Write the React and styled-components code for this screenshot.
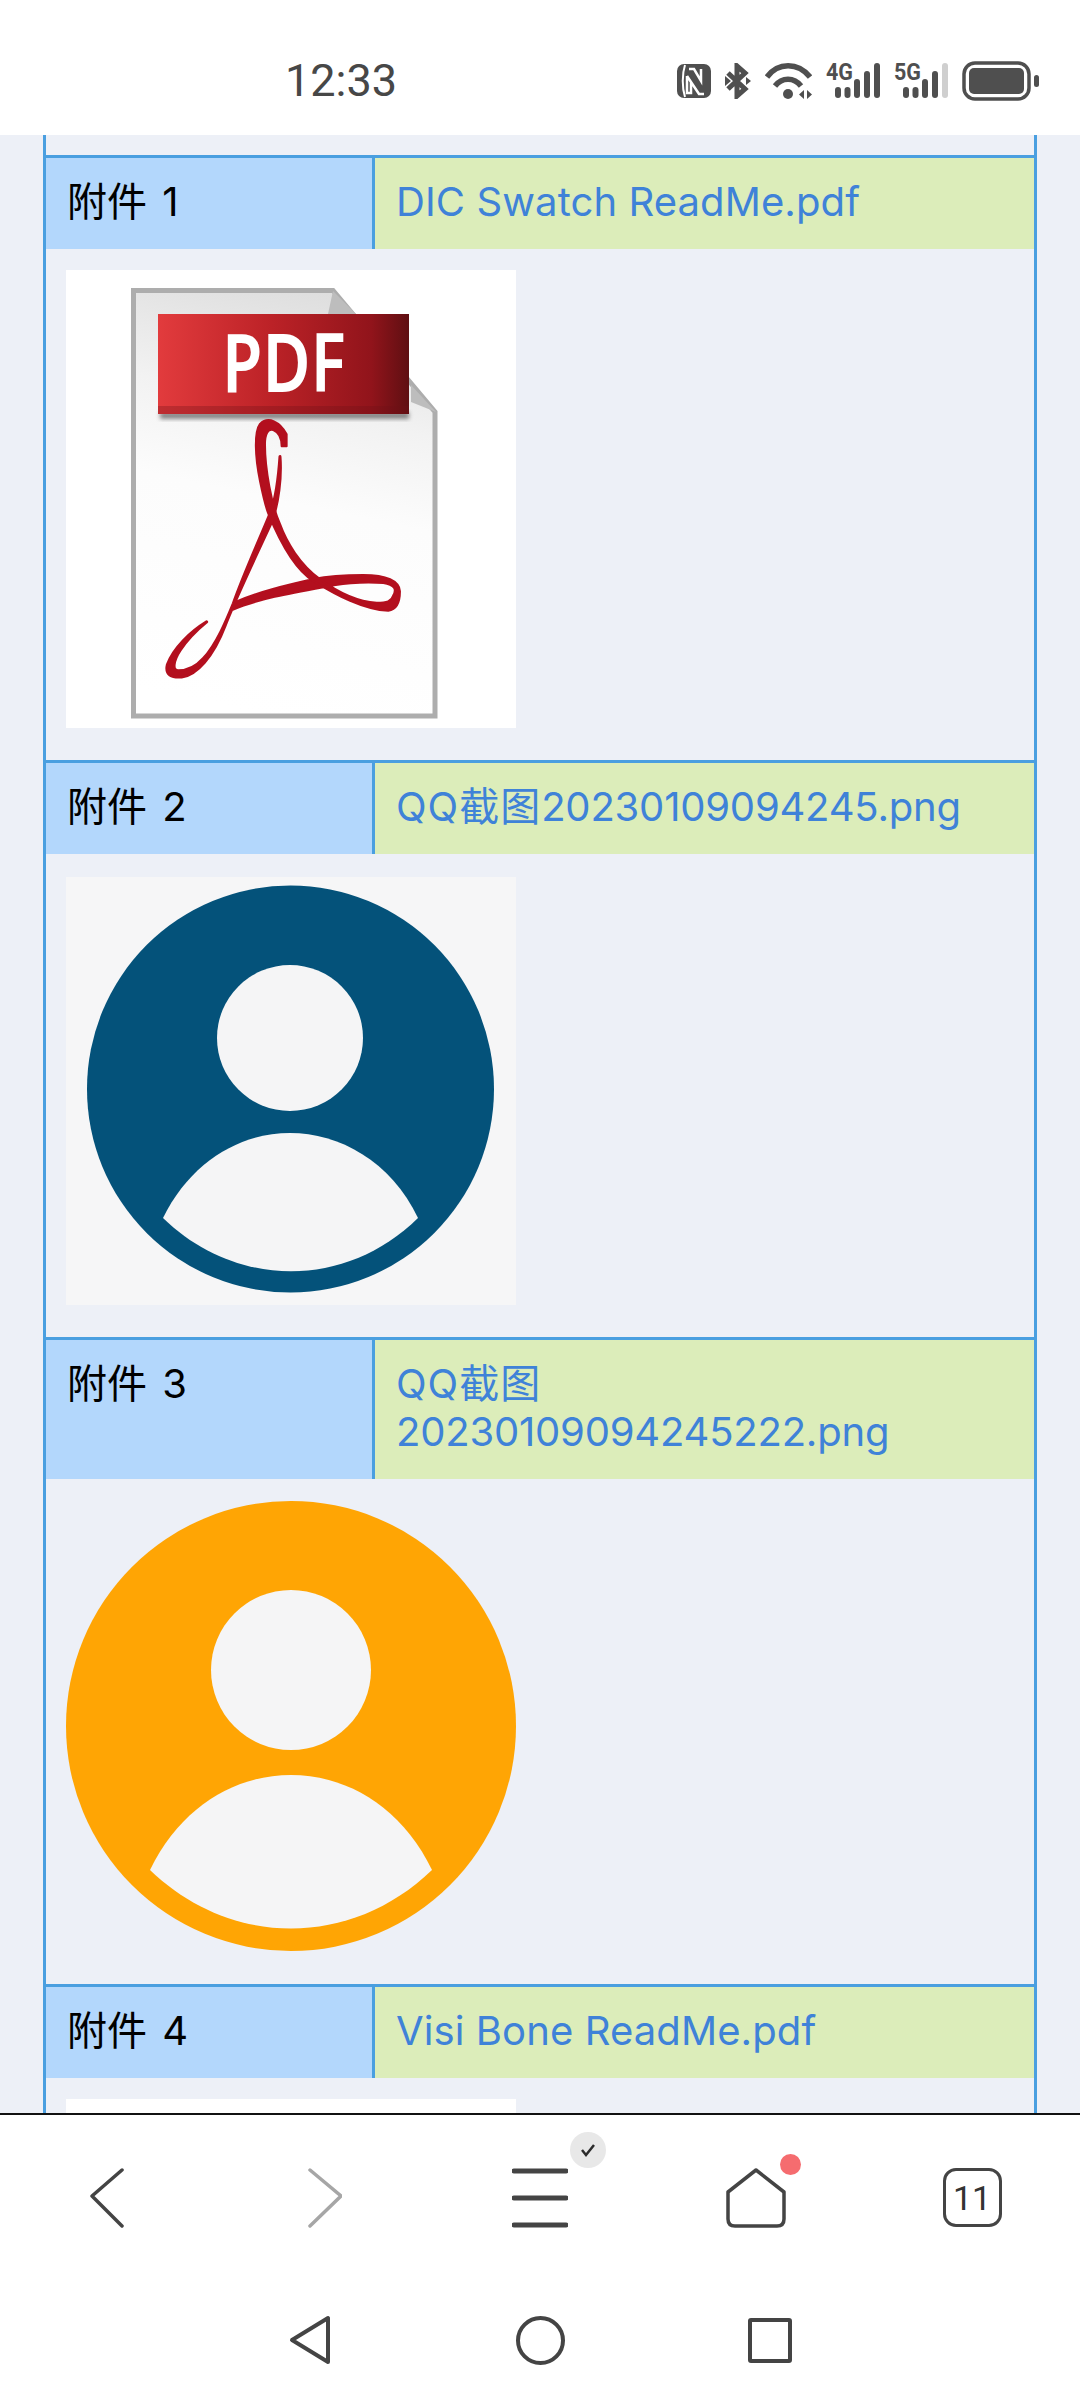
import React from "react";
import styled, { createGlobalStyle } from "styled-components";

const GlobalStyle = createGlobalStyle`
  html, body {
    margin: 0;
    padding: 0;
    background: #fff;
  }
  * {
    box-sizing: border-box;
  }
`;

const NfcIcon = () => (
  <svg width="34" height="34" viewBox="0 0 34 34">
    <rect x="0" y="0" width="34" height="34" rx="7" fill="#4f4f4f" />
    <path d="M8 1 C5 10 5 24 8 33" stroke="#fff" strokeWidth="2" fill="none" />
    <path d="M12 5 L17 5 L24 17 L24 5 M10 12 L22 30 L27 30 M10 12 L10 29 L14 29 L14 18" stroke="#fff" strokeWidth="2.5" fill="none" />
  </svg>
);

const BluetoothIcon = () => (
  <svg width="26" height="36" viewBox="0 0 26 36">
    <path d="M3 10 L20 26 L12 33 L12 3 L20 10 L3 26" stroke="#4f4f4f" strokeWidth="5" fill="none" />
    <path d="M0 13 L6 18 L0 23 Z M26 18 L21 14 L21 22 Z" fill="#4f4f4f" />
  </svg>
);

const WifiIcon = () => (
  <svg width="47" height="36" viewBox="0 0 47 36">
    <path d="M2 14 C13 -1 33 -1 45 14" stroke="#4f4f4f" strokeWidth="5.5" fill="none" />
    <path d="M10 23 C17 14 29 14 36 23" stroke="#4f4f4f" strokeWidth="5.5" fill="none" />
    <circle cx="23" cy="31" r="5" fill="#4f4f4f" />
    <path d="M39 27 L34 31.5 L39 36 Z M42 27 L47 31.5 L42 36 Z" fill="#4f4f4f" />
  </svg>
);

const SignalIcon = ({ label, lastOff }) => (
  <SignalSvg width="54" height="43" viewBox="0 -6 54 43">
    <text x="0" y="18" fontFamily="Roboto, sans-serif" fontWeight="700" fontSize="24" textLength="27" lengthAdjust="spacingAndGlyphs" fill="#4f4f4f">
      {label}
    </text>
    <rect x="9" y="25" width="6" height="11" rx="3" fill="#4f4f4f" />
    <rect x="18.5" y="25" width="6" height="11" rx="3" fill="#4f4f4f" />
    <rect x="28" y="17" width="6" height="19" rx="3" fill="#4f4f4f" />
    <rect x="38" y="9" width="6" height="27" rx="3" fill="#4f4f4f" />
    <rect x="48" y="1" width="6" height="35" rx="3" fill={lastOff ? "#cfcfcf" : "#4f4f4f"} />
  </SignalSvg>
);

const BatteryIcon = () => (
  <svg width="77" height="40" viewBox="0 0 77 40">
    <rect x="2" y="2" width="65" height="36" rx="11" stroke="#4f4f4f" strokeWidth="3.5" fill="none" />
    <rect x="7" y="7" width="55" height="26" rx="5" fill="#4f4f4f" />
    <rect x="72" y="14" width="5" height="12" rx="2.5" fill="#4f4f4f" />
  </svg>
);

// ribbon traced from the picture, numbers are in crop coordinates
const PdfPicture = () => (
  <svg width="450" height="458" viewBox="0 0 450 458">
    <defs>
      <linearGradient id="pdfSheet" x1="0.6" y1="0" x2="0.45" y2="1">
        <stop offset="0" stopColor="#dedede" />
        <stop offset="0.28" stopColor="#f2f2f2" />
        <stop offset="0.5" stopColor="#fcfcfc" />
        <stop offset="1" stopColor="#ffffff" />
      </linearGradient>
      <linearGradient id="pdfLabel" x1="0" y1="0" x2="1" y2="0">
        <stop offset="0" stopColor="#e23b3d" />
        <stop offset="0.45" stopColor="#bc2227" />
        <stop offset="0.85" stopColor="#91141b" />
        <stop offset="1" stopColor="#5f0f12" />
      </linearGradient>
      <filter id="pdfShadow" x="-5%" y="-30%" width="110%" height="160%">
        <feGaussianBlur stdDeviation="2" />
      </filter>
    </defs>
    <path d="M67.5 20.5 L267 20.5 L369 142 L369 446 L67.5 446 Z" fill="url(#pdfSheet)" stroke="#adadad" strokeWidth="5" />
    <path d="M267 21 L290 44 L262 44 Z M345 115 L370 142 L345 132 Z" fill="#bdbdbd" />
    <rect x="94" y="142" width="249" height="7" fill="#555" opacity="0.7" filter="url(#pdfShadow)" />
    <rect x="92" y="44" width="251" height="100" fill="url(#pdfLabel)" />
    <rect x="92" y="136" width="251" height="8" fill="#6d1216" opacity="0.3" />
    <text x="156" y="122" fontFamily="'Noto Sans', sans-serif" fontWeight="600" fontSize="82" textLength="124" lengthAdjust="spacingAndGlyphs" fill="#fff">
      PDF
    </text>
    <g transform="translate(-36 -140) scale(0.3333 0.4082)" fill="#b30f1e" stroke="#b30f1e" strokeLinejoin="round">
      <path vectorEffect="non-scaling-stroke" strokeWidth="2" d="M770 775 L770 745 C750 715 715 700 690 720 C672 740 675 800 690 860 C700 900 708 925 715 940 C745 1000 790 1075 850 1105 C920 1140 1000 1175 1075 1178 C1100 1175 1110 1155 1110 1130 C1108 1105 1070 1090 1000 1090 C930 1090 880 1095 850 1100 C770 1115 690 1130 620 1155 L610 1175 C680 1150 780 1135 880 1120 C920 1112 1000 1105 1060 1110 C1095 1115 1100 1125 1090 1140 C1085 1155 1070 1158 1040 1158 C980 1155 920 1130 870 1100 C810 1065 770 1010 750 965 C725 920 705 830 705 770 C705 745 715 730 730 735 C745 740 755 755 755 775 Z" />
      <path vectorEffect="non-scaling-stroke" strokeWidth="3" d="M750 800 C745 860 735 910 720 940 C690 1000 640 1090 610 1160 C590 1200 560 1260 520 1295 C495 1318 470 1325 445 1325 C425 1325 430 1300 450 1275 C470 1250 500 1225 530 1205 C480 1230 430 1270 412 1310 C405 1335 425 1342 455 1340 C500 1335 550 1290 585 1215 C615 1150 680 1040 725 960 C745 915 755 850 750 800 Z" />
    </g>
  </svg>
);

const UserPicture = ({ width, height, color, circle, head, body }) => (
  <svg width={width} height={height} viewBox={`0 0 ${width} ${height}`}>
    <circle cx={circle.x} cy={circle.y} r={circle.r} fill={color} />
    <circle cx={head.x} cy={head.y} r={head.r} fill="#f5f5f6" />
    <path d={body} fill="#f5f5f6" />
  </svg>
);

const ChevronLeft = ({ color }) => (
  <svg width="36" height="62" viewBox="0 0 36 62">
    <path d="M32 3 L2 29 L32 59" stroke={color} strokeWidth="3.5" fill="none" strokeLinecap="round" strokeLinejoin="round" />
  </svg>
);

const ChevronRight = ({ color }) => (
  <svg width="36" height="62" viewBox="0 0 36 62">
    <path d="M4 3 L35 29 L4 59" stroke={color} strokeWidth="3.5" fill="none" strokeLinecap="round" strokeLinejoin="round" />
  </svg>
);

const MenuIcon = () => (
  <svg width="56" height="60" viewBox="0 0 56 60">
    <path d="M2 3 H54 M2 30 H54 M2 57 H54" stroke="#444" strokeWidth="5" strokeLinecap="round" />
  </svg>
);

const HomeIcon = () => (
  <svg width="60" height="62" viewBox="0 0 60 62">
    <path d="M30 3 L58 25 L58 52 Q58 59 51 59 L9 59 Q2 59 2 52 L2 25 Z" stroke="#444" strokeWidth="3.5" fill="none" strokeLinejoin="round" />
  </svg>
);

const BackTriangle = () => (
  <svg width="42" height="50" viewBox="0 0 42 50">
    <path d="M39 3 L39 47 L3 25 Z" stroke="#444" strokeWidth="4" fill="none" strokeLinejoin="round" />
  </svg>
);

// the fourth picture only shows its white top edge above the bottom bar
const attachments = [
  { label: "附件 1", name: "DIC Swatch ReadMe.pdf", picture: "pdf", tone: "#ffffff", top: 21, height: 458, bottom: 32 },
  { label: "附件 2", prefix: "QQ截图", name: "20230109094245.png", picture: "blue", tone: "#f6f6f7", top: 23, height: 428, bottom: 32 },
  { label: "附件 3", prefix: "QQ截图", name: "20230109094245222.png", picture: "orange", tone: "transparent", top: 22, height: 451, bottom: 32 },
  { label: "附件 4", name: "Visi Bone ReadMe.pdf", picture: null, tone: "#ffffff", top: 21, height: 458, bottom: 32 },
];

const renderPicture = (picture) => {
  if (picture === "pdf") return <PdfPicture />;
  if (picture === "blue") {
    return (
      <UserPicture
        width={450}
        height={428}
        color="#04527a"
        circle={{ x: 224.5, y: 212, r: 203.5 }}
        head={{ x: 224, y: 161, r: 73 }}
        body="M97 341 C125 284 175 256 224 256 C273 256 325 284 352 341 C280 412 170 412 97 341 Z"
      />
    );
  }
  if (picture === "orange") {
    return (
      <UserPicture
        width={450}
        height={451}
        color="#ffa504"
        circle={{ x: 225, y: 225, r: 225 }}
        head={{ x: 225, y: 169, r: 80 }}
        body="M84 369 C115 305 170 274 225 274 C280 274 335 305 366 369 C285 447 165 447 84 369 Z"
      />
    );
  }
  return null;
};

export default function App() {
  return (
    <>
      <GlobalStyle />
      <Screen>
        <StatusBar>
          <Time>12:33</Time>
          <StatusIcons>
            <NfcIcon />
            <BluetoothIcon />
            <WifiIcon />
            <SignalIcon label="4G" />
            <SignalIcon label="5G" lastOff />
            <BatteryIcon />
          </StatusIcons>
        </StatusBar>
        <Content>
          <Frame>
            {attachments.map((item) => (
              <Attachment key={item.label}>
                <HeaderRow>
                  <LabelCell>{item.label}</LabelCell>
                  <FileCell>
                    <FileLink>
                      {item.prefix && <FilePrefix>{item.prefix}</FilePrefix>}
                      {item.prefix ? <FileDigits>{item.name}</FileDigits> : item.name}
                    </FileLink>
                  </FileCell>
                </HeaderRow>
                <PictureArea $top={item.top} $bottom={item.bottom}>
                  <Picture $tone={item.tone} $height={item.height}>
                    {renderPicture(item.picture)}
                  </Picture>
                </PictureArea>
              </Attachment>
            ))}
          </Frame>
        </Content>
        <BottomBar>
          <Toolbar>
            <ToolButton>
              <ChevronLeft color="#444" />
            </ToolButton>
            <ToolButton>
              <ChevronRight color="#a6a6a6" />
            </ToolButton>
            <ToolButton>
              <IconWrap>
                <MenuIcon />
                <CheckBadge>
                  <svg width="18" height="16" viewBox="0 0 18 16">
                    <path d="M3 8 L7 13 L15 3" stroke="#2b2b2b" strokeWidth="2.5" fill="none" />
                  </svg>
                </CheckBadge>
              </IconWrap>
            </ToolButton>
            <ToolButton>
              <IconWrap>
                <HomeIcon />
                <RedDot />
              </IconWrap>
            </ToolButton>
            <ToolButton>
              <TabCount>11</TabCount>
            </ToolButton>
          </Toolbar>
          <SystemNav>
            <BackTriangle />
            <HomeCircle />
            <RecentSquare />
          </SystemNav>
        </BottomBar>
      </Screen>
    </>
  );
}

const SignalSvg = styled.svg`
  margin-top: -6px;
`;

const Screen = styled.div`
  width: 1080px;
  height: 2400px;
  display: flex;
  flex-direction: column;
  overflow: hidden;
  background: #fff;
  font-family: "Inter", "Noto Sans CJK SC", sans-serif;
`;

const StatusBar = styled.div`
  height: 135px;
  flex: none;
  display: flex;
  align-items: center;
  justify-content: space-between;
  padding: 26px 41px 0 285px;
  background: #fff;
`;

const Time = styled.div`
  font-family: "Roboto", sans-serif;
  font-size: 45px;
  font-weight: 400;
  color: #474747;
`;

const StatusIcons = styled.div`
  display: flex;
  align-items: center;
  gap: 14px;
`;

const Content = styled.div`
  flex: 1;
  min-height: 0;
  overflow: hidden;
  background: #edf0f7;
  padding: 0 43px;
`;

const Frame = styled.div`
  padding-top: 20px;
  border-left: 3px solid #4a9fe0;
  border-right: 3px solid #4a9fe0;
`;

const Attachment = styled.div`
  border-top: 3px solid #4a9fe0;
`;

const HeaderRow = styled.div`
  display: grid;
  grid-template-columns: 326px 3px 1fr;
  background: #4a9fe0;
`;

const LabelCell = styled.div`
  grid-column: 1;
  background: #b3d7fc;
  color: #000;
  font-size: 40px;
  line-height: 48px;
  word-spacing: 4px;
  padding: 20px 21px 23px;
`;

const FileCell = styled.div`
  grid-column: 3;
  background: #dcedba;
  padding: 20px 21px 23px;
  font-size: 40px;
  line-height: 48px;
`;

const FileLink = styled.span`
  color: #3f82d8;
  letter-spacing: 0.1px;
`;

const FilePrefix = styled.span`
  letter-spacing: 1px;
`;

const FileDigits = styled.span`
  letter-spacing: -0.2px;
`;

const PictureArea = styled.div`
  padding: ${(p) => p.$top}px 0 ${(p) => p.$bottom}px 20px;
`;

const Picture = styled.div`
  width: 450px;
  height: ${(p) => p.$height}px;
  background: ${(p) => p.$tone};
  svg {
    display: block;
  }
`;

const BottomBar = styled.div`
  flex: none;
  height: 287px;
  background: #fff;
  border-top: 2px solid #111;
  display: flex;
  flex-direction: column;
`;

const Toolbar = styled.div`
  height: 165px;
  display: grid;
  grid-template-columns: repeat(5, 216px);
`;

const ToolButton = styled.div`
  display: flex;
  align-items: center;
  justify-content: center;
`;

const IconWrap = styled.div`
  position: relative;
  display: flex;
`;

const CheckBadge = styled.div`
  position: absolute;
  top: -36px;
  right: -38px;
  width: 36px;
  height: 36px;
  border-radius: 50%;
  background: #e8e8e8;
  display: flex;
  align-items: center;
  justify-content: center;
`;

const RedDot = styled.div`
  position: absolute;
  top: -13px;
  right: -15px;
  width: 21px;
  height: 21px;
  border-radius: 50%;
  background: #f56c6f;
`;

const TabCount = styled.div`
  width: 59px;
  height: 59px;
  border: 3.5px solid #444;
  border-radius: 13px;
  display: flex;
  align-items: center;
  justify-content: center;
  font-family: "Roboto", sans-serif;
  font-size: 34px;
  color: #333;
`;

const SystemNav = styled.div`
  flex: 1;
  display: grid;
  grid-template-columns: 50px 50px 50px;
  justify-content: center;
  column-gap: 180px;
  align-items: center;
  justify-items: center;
`;

const HomeCircle = styled.div`
  width: 49px;
  height: 49px;
  border: 4px solid #444;
  border-radius: 50%;
`;

const RecentSquare = styled.div`
  width: 44px;
  height: 45px;
  border: 4px solid #444;
  border-radius: 3px;
`;
